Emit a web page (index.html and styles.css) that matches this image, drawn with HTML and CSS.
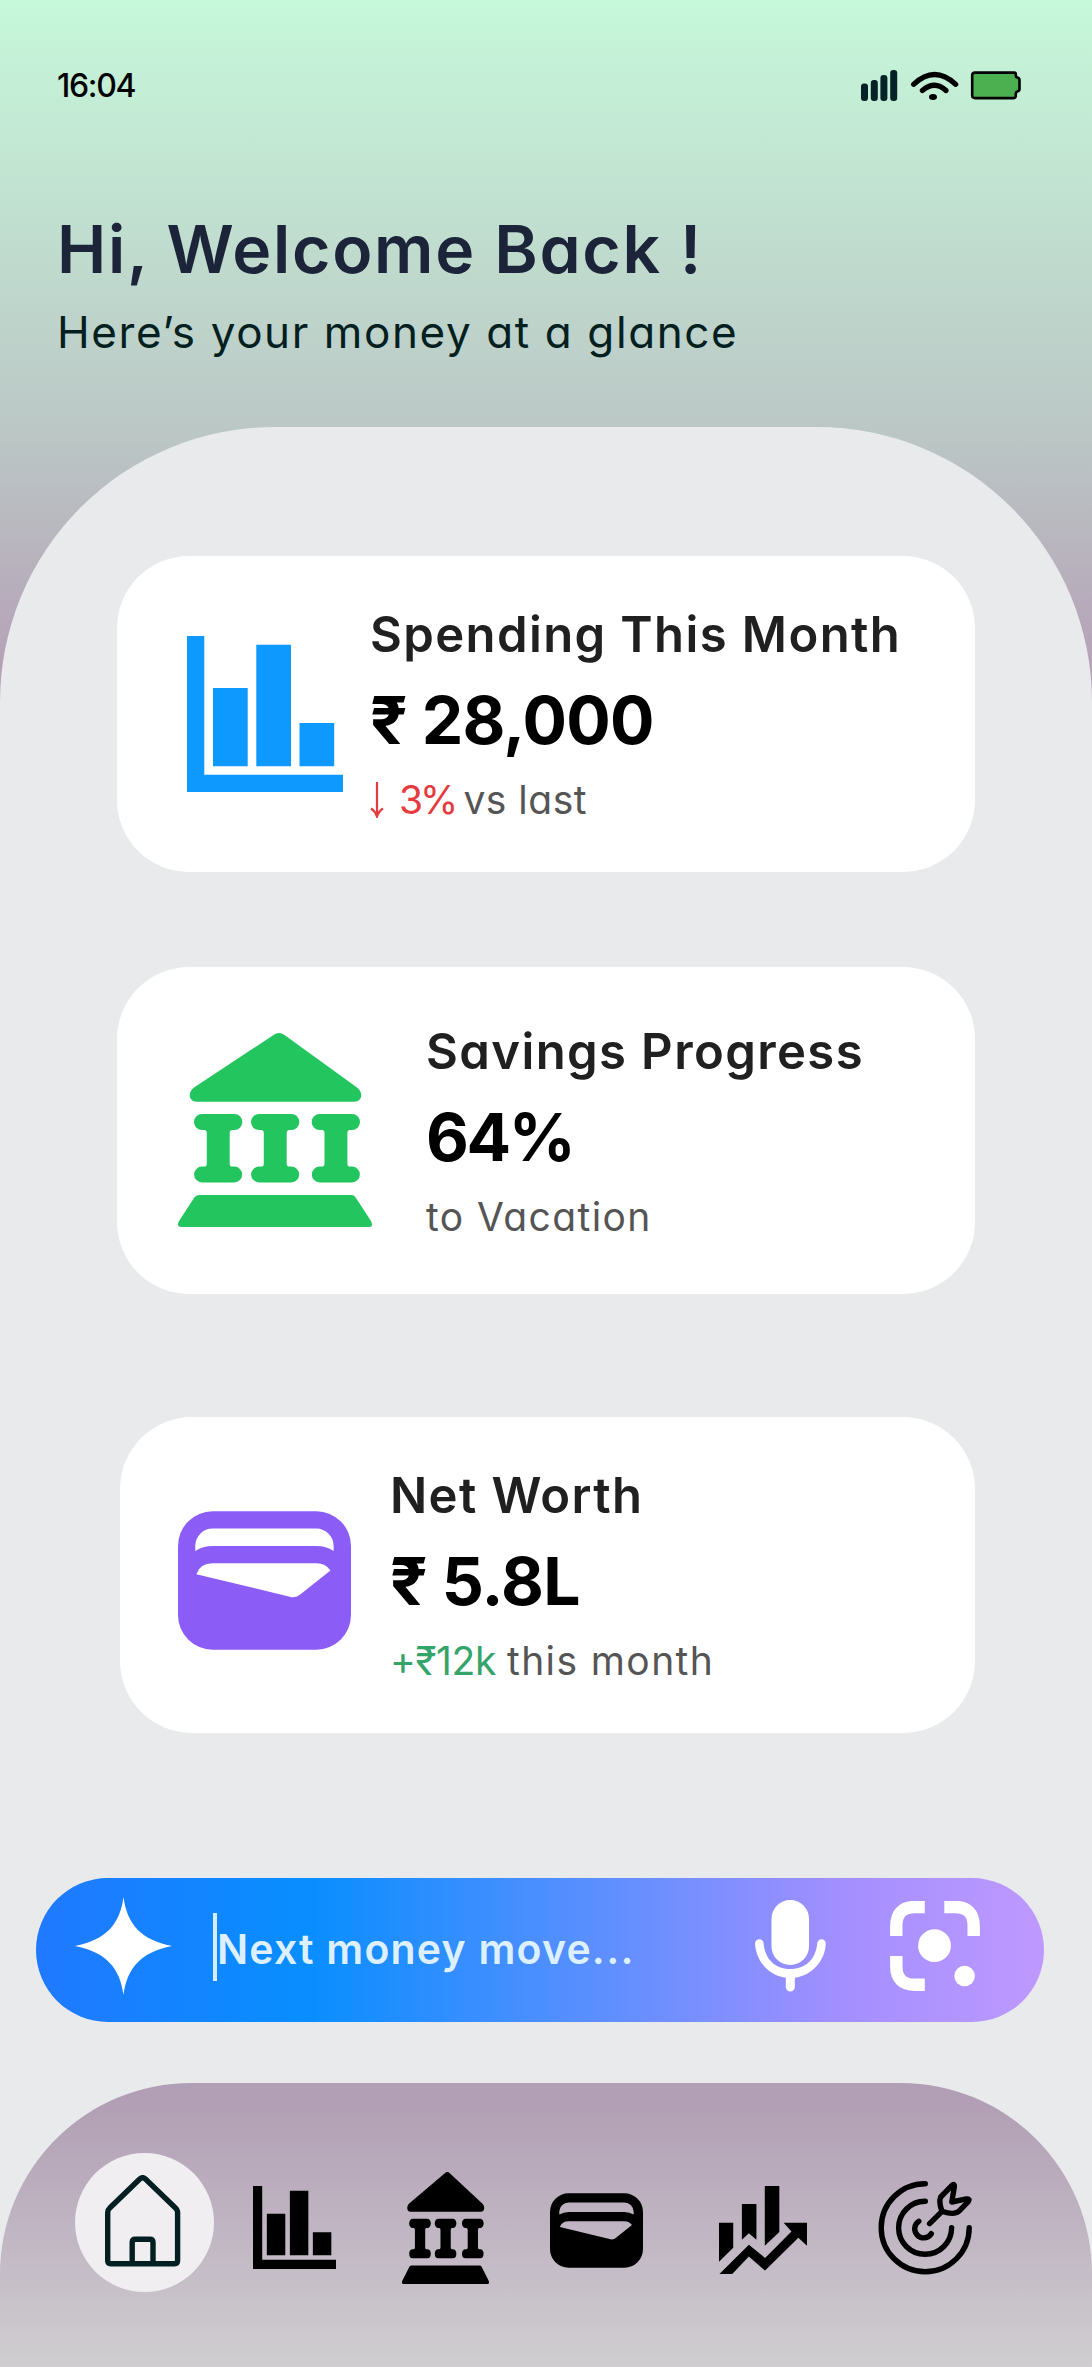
FILE: index.html
```html
<!DOCTYPE html>
<html lang="en">
<head>
<meta charset="utf-8">
<title>Money overview</title>
<link rel="stylesheet" href="styles.css">
</head>
<body>
<svg class="sprite" aria-hidden="true">
  <symbol id="i-bars" viewBox="0 0 156 156">
    <path d="M0 0h17.3v138.7H156V156H0zM26 52h34.7v78.3H26zM69.3 8.7H104v121.6H69.3zM112.5 87h34.7v43.3h-34.7z"/>
  </symbol>
  <symbol id="i-bank" viewBox="0 0 194 194" preserveAspectRatio="none">
    <path d="M95.500 2Q101 -2 106.500 2L179 54.500C186 60 184 68.700 176 68.700H19C11 68.700 9 60 16 54.500z"/>
    <path id="col" d="M24 81H56.300A8 8 0 0 1 56.300 97H54.500Q51.700 97 51.700 100V130.700Q51.700 133.600 54.500 133.600H56.300A7.900 7.900 0 0 1 56.300 149.400H24A7.900 7.900 0 0 1 24 133.600H26Q28.800 133.600 28.800 130.700V100Q28.800 97 26 97H24A8 8 0 0 1 24 81z"/>
    <use href="#col" x="57"/>
    <use href="#col" x="117.700"/>
    <path d="M21.500 162H173.500Q176 162 177.500 164.300L193.300 188.500Q195.500 194 191 194H3Q-1.500 194 .7 188.500L16.500 164.300Q18.500 162 21.500 162z"/>
  </symbol>
  <symbol id="i-wallet" viewBox="0 0 173.400 138.700">
    <path fill-rule="evenodd" d="M34.700 0h104a34.700 34.700 0 0 1 34.700 34.700V104a34.700 34.700 0 0 1-34.700 34.700h-104A34.700 34.700 0 0 1 0 104V34.700A34.700 34.700 0 0 1 34.700 0zM34.700 17.300A17.300 17.300 0 0 0 17.300 34.700V39.700Q25 34.700 34.700 34.700H138.700Q148.500 34.700 156 39.700V34.700A17.300 17.300 0 0 0 138.700 17.300zM34.700 52Q22 52 18.400 63L113 85.800Q118.500 87 122.500 83.500L152.800 59.300Q148 52 138.700 52z"/>
  </symbol>
</svg>

<div class="screen">
  <header class="top">
    <div class="status">
      <span class="time">16:04</span>
      <svg class="status-icons" width="162" height="34" viewBox="0 0 162 34">
        <g fill="#062226">
          <rect x="1" y="15.500" width="7" height="17.500" rx="3"/><rect x="10.800" y="12" width="7" height="21" rx="3"/>
          <rect x="20.400" y="7" width="7" height="26" rx="3"/><rect x="30.200" y="2" width="7" height="31" rx="3"/>
        </g>
        <g fill="none" stroke="#000" stroke-width="5.200" stroke-linecap="round">
          <path d="M53.600 16.300Q74.600-3.300 95.700 16.300"/><path d="M62.400 22.500Q74.600 12 86 22.500"/>
        </g>
        <ellipse cx="73" cy="29" rx="4" ry="3"/>
        <path d="M115 4.600h39.300q1.500 0 1.500 1.500v1.500q0 1.500 1.500 1.800 2.200.5 2.200 2.500v9q0 2-2.200 2.500-1.500.3-1.500 1.800v2.100q0 2.800-2 2.800H115q-2.800 0-2.800-2.500V7.100q0-2.500 2.800-2.500z" fill="#4caf50" stroke="#000" stroke-width="2.600"/>
      </svg>
    </div>
    <h1 class="hello">Hi, Welcome Back !</h1>
    <p class="lead">Here’s your money at a glance</p>
  </header>

  <main class="panel">
    <section class="card spending">
      <svg class="card-icon"><use href="#i-bars"/></svg>
      <div class="card-text">
        <h2>Spending This Month</h2>
        <p class="amount">₹ 28,000</p>
        <p class="note"><span class="down"><svg width="14" height="36" viewBox="0 0 14 36"><path d="M7 0V34M1 26.500Q5 29 7 34.500Q9 29 13 26.500" fill="none" stroke="currentColor" stroke-width="2.200"/></svg>3%</span> <span class="versus">vs last</span></p>
      </div>
    </section>

    <section class="card savings">
      <svg class="card-icon"><use href="#i-bank"/></svg>
      <div class="card-text">
        <h2>Savings Progress</h2>
        <p class="amount">64%</p>
        <p class="note">to Vacation</p>
      </div>
    </section>

    <section class="card worth">
      <svg class="card-icon"><use href="#i-wallet"/></svg>
      <div class="card-text">
        <h2>Net Worth</h2>
        <p class="amount">₹ 5.8L</p>
        <p class="note"><span class="up">+₹12k</span> <span>this month</span></p>
      </div>
    </section>

    <div class="ask">
      <svg class="spark" width="97" height="98" viewBox="0 0 97 98"><path d="M48.500 0C52 27 66 43 97 49C66 55 52 71 48.500 98C45 71 31 55 0 49C31 43 45 27 48.500 0z"/></svg>
      <span class="caret"></span>
      <span class="prompt">Next money move...</span>
      <svg class="mic" width="71" height="92" viewBox="0 0 71 92"><rect x="16.500" width="37.500" height="65" rx="18.700"/><path d="M0 43.500a4.300 4.300 0 0 1 8.600 0C10 59 20 69 35.300 69S61 59 62.200 43.500a4.300 4.300 0 0 1 8.600 0C70 61 57 75.500 39.800 77.700V87a4.500 4.500 0 0 1-9 0V77.700C13.500 75.500 1 61 0 43.500z"/></svg>
      <svg class="lens" width="90" height="90" viewBox="0 0 90 90"><path d="M6.300 35V25Q6.300 6 25 6H34.800M54.300 6H65Q83.700 6 83.700 25V35M6.300 55V65Q6.300 83.700 25 83.700H34.800" fill="none" stroke="#fff" stroke-width="12.400"/><circle cx="44.500" cy="44.700" r="16.400"/><circle cx="74.600" cy="75" r="10.300"/></svg>
    </div>

    <nav class="tabs">
      <span class="tab home"><svg width="76" height="92" viewBox="0 0 76 92"><path d="M5 32.700L34.500 4.200Q37.600 1.300 40.700 4.200L70.200 32.700Q72.600 34.800 72.600 37.500V85.500Q72.600 88.700 69.500 88.700H5.900Q2.700 88.700 2.700 85.500V37.500Q2.700 34.800 5 32.700zM27.200 88.700V67.500Q27.200 64.300 30.400 64.300H44.900Q48 64.300 48 67.500V88.700" fill="none" stroke="#041f22" stroke-width="5.400"/></svg></span>
      <svg class="tab t-bars"><use href="#i-bars"/></svg>
      <svg class="tab t-bank"><use href="#i-bank"/></svg>
      <svg class="tab t-wallet"><use href="#i-wallet"/></svg>
      <svg class="tab t-trend" viewBox="0 0 88.400 88.400"><path d="M0 37H14.300V62L0 76zM23 18H37.600V54L30 47.500L23 54zM46 0H60.600V46.300L46 60zM.4 88.400L30 59L46.300 72.300L72.800 45.700L65 37H88.400V60L79.700 52L46.300 85L30 70.700L13.300 88.400z"/></svg>
      <svg class="tab t-goal" viewBox="0 0 94 94"><g fill="none" stroke="#000" stroke-width="5.400" stroke-linecap="round" stroke-linejoin="round"><path d="M47.300 2.700A44 44 0 1 0 91.200 46.700M47.300 20.300A26.500 26.500 0 1 0 73.600 46.700M40.800 40.300A9 9 0 1 0 53.300 52.700M51.600 42.700L64 30.300Q60.500 21 62.700 16L74 4.300Q76.800 2 76.300 6L73.800 21L88.500 17.900Q92.500 17.500 90 20.800L80.800 30.300Q76 34.500 64 30.300"/></g></svg>
    </nav>
  </main>
</div>
</body>
</html>
```
FILE: styles.css
```css
* { box-sizing: border-box; }
body {
  margin: 0;
  font-family: Inter, "Open Sans", sans-serif;
  font-feature-settings: "cv11";
}
h1, h2, p { margin: 0; white-space: nowrap; }
svg { display: block; flex: none; }
.sprite { position: absolute; width: 0; height: 0; }

.screen {
  display: flex;
  flex-direction: column;
  width: 1092px;
  height: 2367px;
  overflow: hidden;
  background: linear-gradient(#c6f8da 0, #bbc6c5 440px, #b59fb6 680px);
}

/* Header */
.top { height: 427px; padding: 65px 57px 0; }
.status { display: flex; justify-content: space-between; align-items: center; height: 40px; }
.time { font-size: 32px; font-weight: 500; letter-spacing: -1.3px; }
.status-icons { margin-right: 13px; }
.hello { margin-top: 104px; font-size: 66px; line-height: 80px; font-weight: 600; letter-spacing: 1.7px; color: #1b2438; }
.lead { margin-top: 13px; font-size: 44px; line-height: 60px; letter-spacing: 1.6px; color: #031f20; }

/* Rounded content sheet */
.panel {
  flex: 1;
  display: flex;
  flex-direction: column;
  padding-top: 129px;
  border-radius: 275px 275px 0 0;
  background: #e8eaec;
}
.card {
  display: flex;
  width: 858px;
  margin-left: 117px;
  border-radius: 72px;
  background: #fff;
}
.card h2 { font-size: 49px; line-height: 80px; font-weight: 600; letter-spacing: 1.4px; color: #202020; }
.amount { font-size: 66px; line-height: 90px; font-weight: 700; letter-spacing: -.8px; color: #000; }
.note { display: flex; gap: 11px; font-size: 39px; line-height: 70px; letter-spacing: 1.4px; color: #555; }
.down { display: flex; align-items: center; gap: 15px; margin-right: -3px; letter-spacing: -3px; color: #e53b3f; }
.versus { letter-spacing: .5px; }
.up { letter-spacing: -.4px; color: #34a46a; }

.spending { height: 316px; padding: 39px 0 0 70px; }
.spending .card-icon { width: 156px; height: 156px; margin: 41px 27px 0 0; fill: #0d99ff; }
.savings { height: 327px; margin-top: 95px; padding: 45px 0 0 61px; }
.savings .card-icon { width: 194px; height: 194px; margin: 21px 54px 0 0; fill: #22c55e; }
.savings .amount { letter-spacing: -2.4px; }
.worth { width: 855px; height: 316px; margin-top: 123px; margin-left: 120px; padding: 39px 0 0 58px; }
.worth .card-icon { width: 173px; height: 139px; margin: 55px 39px 0 0; fill: #8b5cf6; }

/* Assistant prompt */
.ask {
  display: flex;
  align-items: flex-start;
  width: 1008px;
  height: 144px;
  margin: 145px 0 0 36px;
  padding: 19px 0 0 39px;
  border-radius: 72px;
  background: linear-gradient(90deg, #2079ff 0, #088eff 27%, #a38fff 80%, #be99ff 100%);
  fill: #fff;
}
.caret { width: 4px; height: 68px; margin: 16px 0 0 41px; background: #d7edff; }
.prompt { width: 538px; font-size: 41px; line-height: 60px; margin-top: 22px; font-weight: 600; letter-spacing: 1.2px; color: #dcf0ff; white-space: nowrap; }
.mic { margin-top: 3px; }
.lens { margin: 4px 0 0 64px; }

/* Bottom navigation */
.tabs {
  display: flex;
  width: 1092px;
  height: 284px;
  margin-top: 61px;
  padding: 70px 0 0 75px;
  border-radius: 191px 191px 0 0;
  background: linear-gradient(#b29fb5 0, #b29fb5 8%, #d0ced1 100%);
}
.tab { flex: none; }
.home { width: 139px; height: 139px; padding: 22px 0 0 30px; border-radius: 50%; background: #f0eef1; }
.t-bars { width: 83px; height: 83px; margin: 33px 0 0 39px; }
.t-bank { width: 87px; height: 112px; margin: 19px 0 0 66px; }
.t-wallet { width: 93px; height: 75px; margin: 40px 0 0 61px; }
.t-trend { width: 88px; height: 88px; margin: 33px 0 0 76px; }
.t-goal { width: 94px; height: 94px; margin: 28px 0 0 71px; }
```
